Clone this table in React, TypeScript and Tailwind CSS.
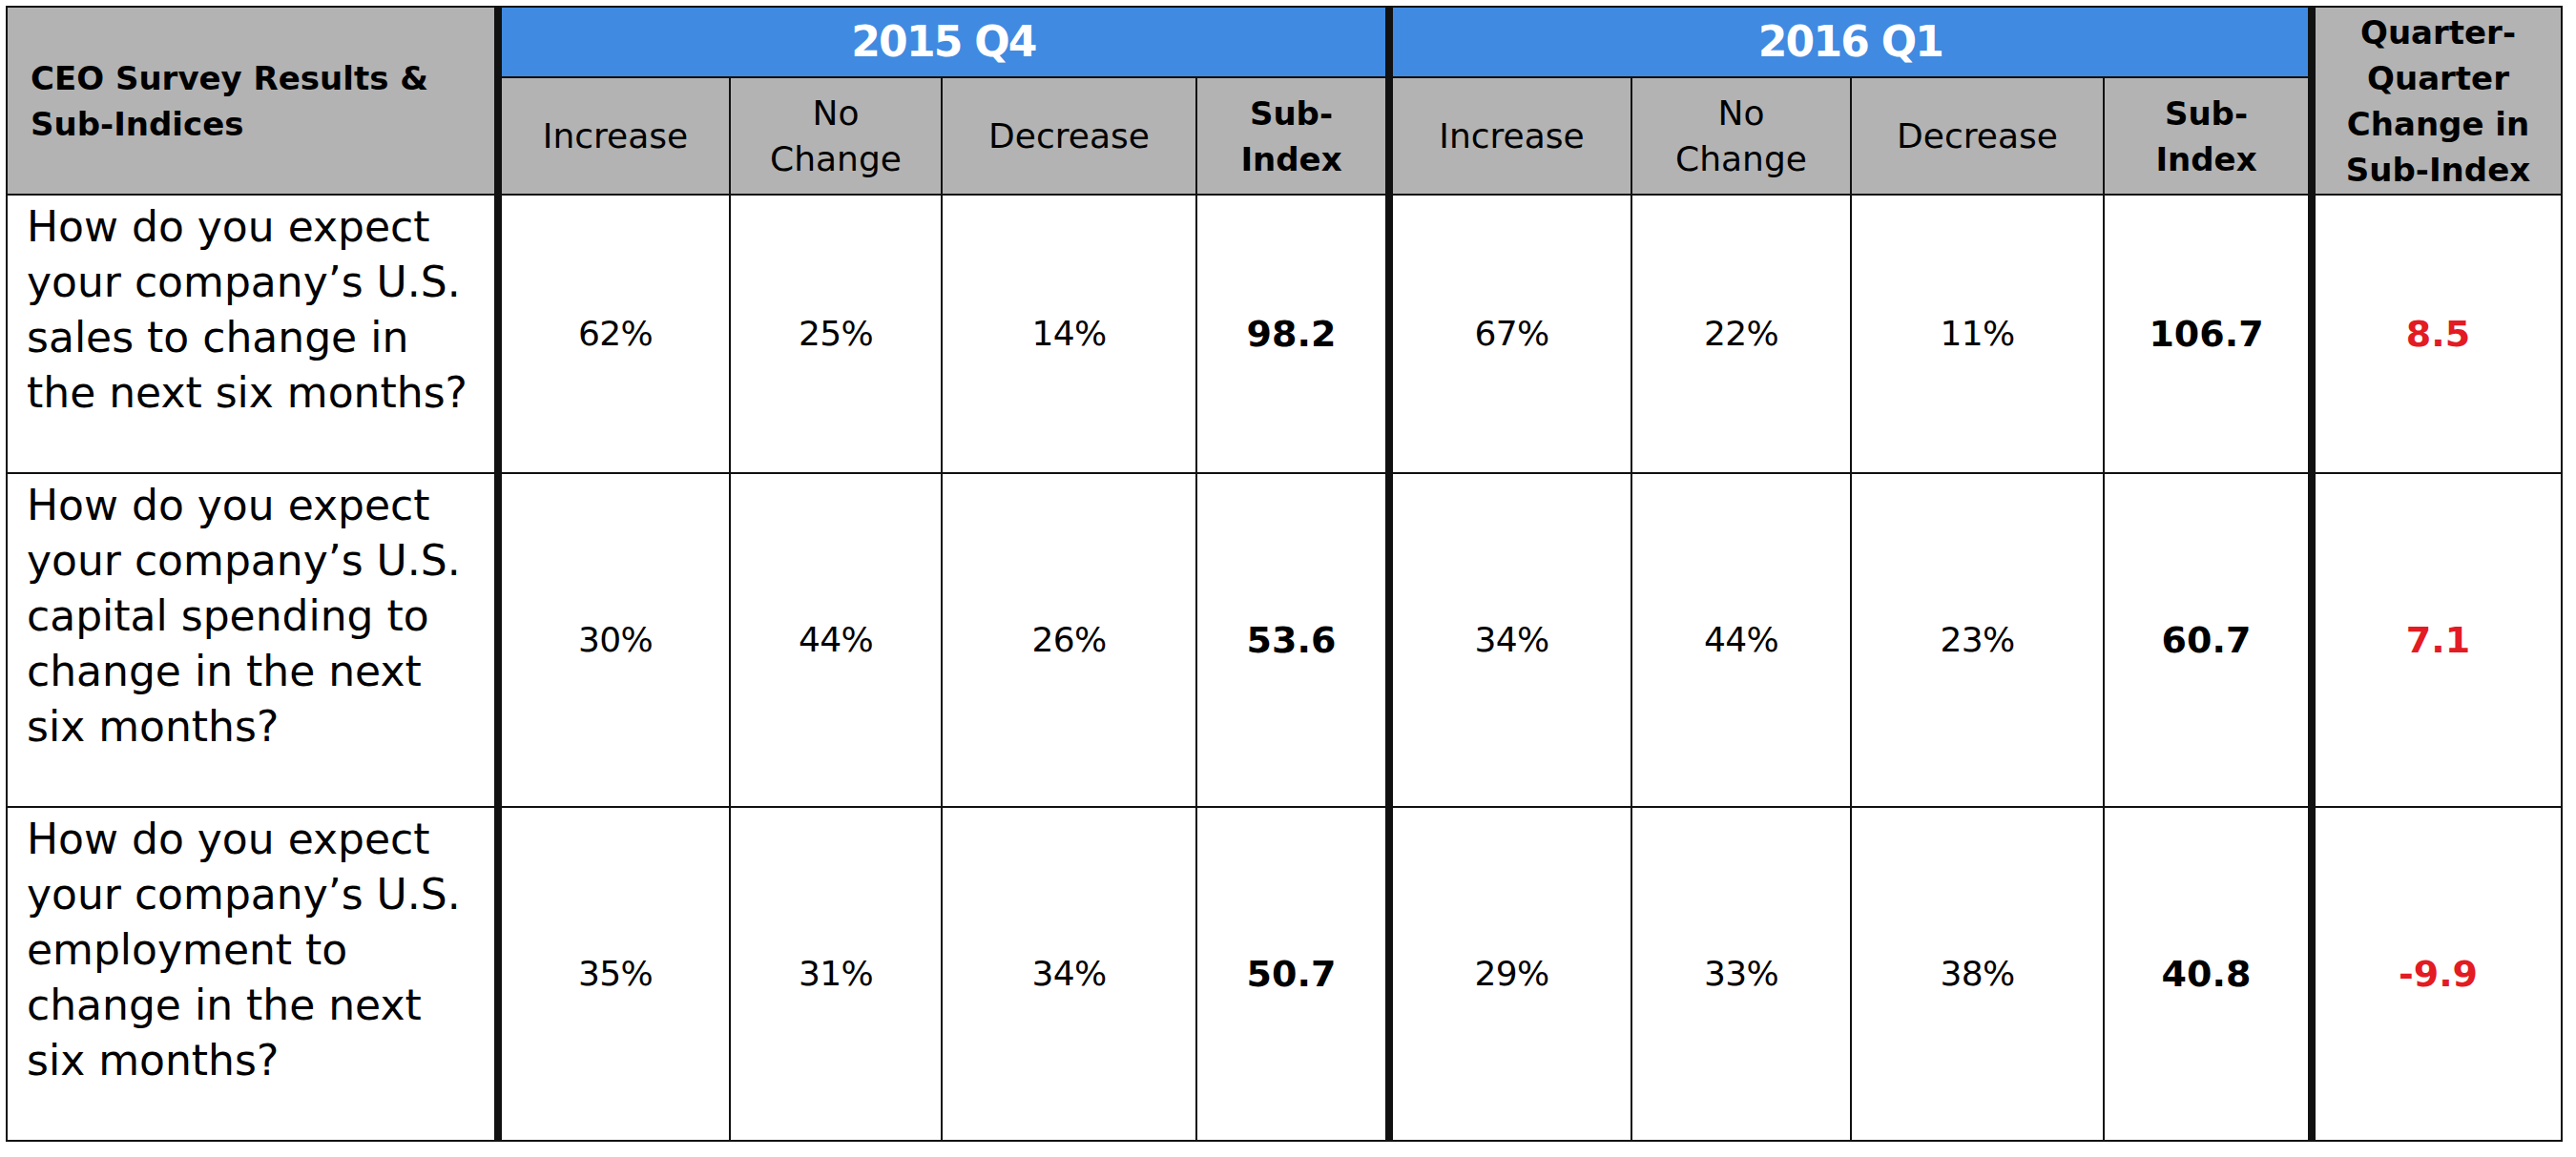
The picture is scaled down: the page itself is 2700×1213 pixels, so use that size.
import React from "react";

type SurveyRow = {
  question: string[];
  q4: string[];
  q4Index: string;
  q1: string[];
  q1Index: string;
  change: string;
};

const ROWS: SurveyRow[] = [
  {
    question: [
      "How do you expect",
      "your company’s U.S.",
      "sales to change in",
      "the next six months?",
    ],
    q4: ["62%", "25%", "14%"],
    q4Index: "98.2",
    q1: ["67%", "22%", "11%"],
    q1Index: "106.7",
    change: "8.5",
  },
  {
    question: [
      "How do you expect",
      "your company’s U.S.",
      "capital spending to",
      "change in the next",
      "six months?",
    ],
    q4: ["30%", "44%", "26%"],
    q4Index: "53.6",
    q1: ["34%", "44%", "23%"],
    q1Index: "60.7",
    change: "7.1",
  },
  {
    question: [
      "How do you expect",
      "your company’s U.S.",
      "employment to",
      "change in the next",
      "six months?",
    ],
    q4: ["35%", "31%", "34%"],
    q4Index: "50.7",
    q1: ["29%", "33%", "38%"],
    q1Index: "40.8",
    change: "-9.9",
  },
];

const thin = "border-r-2 border-b-2 border-[#111]";
const thick = "border-r-8 border-b-2 border-[#111]";
const center = "flex items-center justify-center text-center";
const grayHead = "bg-[#b3b3b3] text-black";

function SubHeaders({ last }: { last: boolean }) {
  return (
    <>
      <div className={`${thin} ${grayHead} ${center} text-[36px] leading-[48px]`}>
        Increase
      </div>
      <div className={`${thin} ${grayHead} ${center} text-[36px] leading-[48px]`}>
        <span>
          No
          <br />
          Change
        </span>
      </div>
      <div className={`${thin} ${grayHead} ${center} text-[36px] leading-[48px]`}>
        Decrease
      </div>
      <div
        className={`${last ? thick : thick} ${grayHead} ${center} text-[34px] font-bold leading-[48px]`}
      >
        <span>
          Sub-
          <br />
          Index
        </span>
      </div>
    </>
  );
}

function DataCells({ values, index }: { values: string[]; index: string }) {
  return (
    <>
      {values.map((value, i) => (
        <div
          key={i}
          className={`${thin} ${center} bg-white text-[36px] tracking-[-0.02em] text-black`}
        >
          {value}
        </div>
      ))}
      <div className={`${thick} ${center} bg-white text-[38px] font-bold text-black`}>
        {index}
      </div>
    </>
  );
}

export default function App() {
  return (
    <div className="min-h-screen bg-white font-['DejaVu_Sans',sans-serif]">
      <div className="ml-[6px] pt-[6px]">
        <div className="grid w-fit grid-cols-[518px_240px_222px_267px_205px_251px_230px_265px_221px_259px] grid-rows-[74px_123px_292px_350px_350px] border-l-2 border-t-2 border-[#111]">
          <div
            className={`${thick} ${grayHead} row-span-2 flex items-center pl-[24px] text-[34px] font-bold leading-[48px]`}
          >
            <span>
              CEO Survey Results &amp;
              <br />
              Sub-Indices
            </span>
          </div>
          <div
            className={`${thick} col-span-4 ${center} bg-[#408ae1] text-[44px] font-bold tracking-[-0.04em] text-white`}
          >
            2015 Q4
          </div>
          <div
            className={`${thick} col-span-4 ${center} bg-[#408ae1] text-[44px] font-bold tracking-[-0.04em] text-white`}
          >
            2016 Q1
          </div>
          <div
            className={`${thin} ${grayHead} row-span-2 ${center} whitespace-nowrap text-[34px] font-bold leading-[48px]`}
          >
            <span>
              Quarter-
              <br />
              Quarter
              <br />
              Change in
              <br />
              Sub-Index
            </span>
          </div>

          <SubHeaders last={false} />
          <SubHeaders last />

          {ROWS.map((row) => (
            <React.Fragment key={row.question[2]}>
              <div
                className={`${thick} bg-white pl-[20px] pt-[4px] text-[44px] leading-[58px] text-black`}
              >
                {row.question.map((line) => (
                  <div key={line} className="whitespace-nowrap">
                    {line}
                  </div>
                ))}
              </div>
              <DataCells values={row.q4} index={row.q4Index} />
              <DataCells values={row.q1} index={row.q1Index} />
              <div
                className={`${thin} ${center} bg-white text-[38px] font-bold text-[#e31b23]`}
              >
                {row.change}
              </div>
            </React.Fragment>
          ))}
        </div>
      </div>
    </div>
  );
}
